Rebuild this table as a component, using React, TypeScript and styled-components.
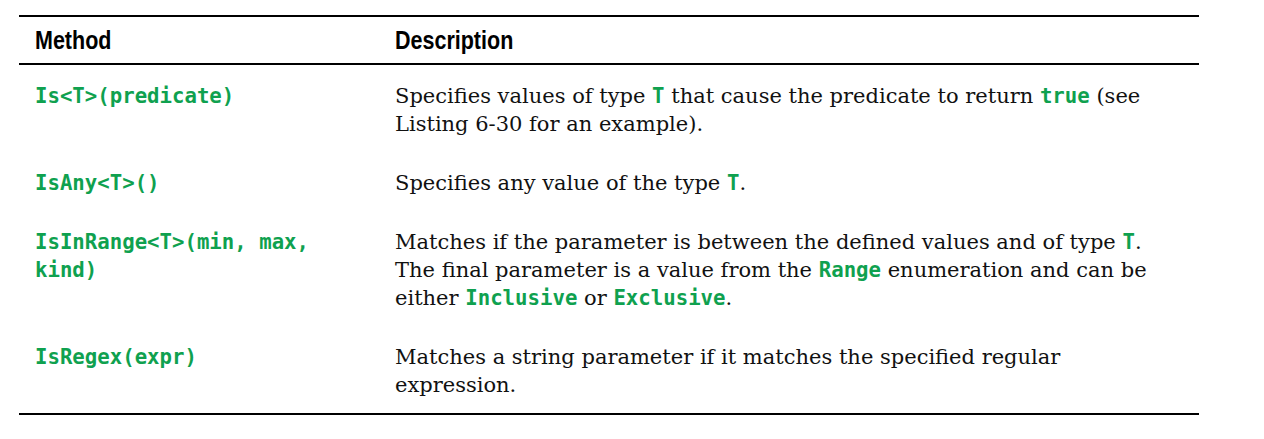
import React from 'react';
import styled, { createGlobalStyle } from 'styled-components';

const GlobalStyle = createGlobalStyle`
    html, body {
        margin: 0;
        padding: 0;
        background: #ffffff;
    }
`;

const Page = styled.div`
    padding: 15px 0 0 19px;
    width: 1180px;
`;

const Table = styled.table`
    width: 1180px;
    border-collapse: collapse;
    table-layout: fixed;
    border-top: 2px solid #000;
    border-bottom: 2px solid #000;
`;

const HeadCell = styled.th<{ $width?: string }>`
    width: ${props => props.$width || 'auto'};
    text-align: left;
    vertical-align: middle;
    height: 46px;
    padding: 0 0 0 16px;
    border-bottom: 2px solid #000;
`;

// no narrow sans installed, so squeeze the bold sans a little
const HeadLabel = styled.span`
    display: inline-block;
    transform: scaleX(0.86);
    transform-origin: left center;
    font-family: 'Liberation Sans Narrow', 'Liberation Sans', Arial, sans-serif;
    font-weight: bold;
    font-size: 25px;
    line-height: 28px;
    color: #000;
    white-space: nowrap;
`;

const Cell = styled.td<{ $last?: boolean }>`
    vertical-align: top;
    padding: 17px 16px 14px 16px;
    font-family: 'DejaVu Serif', 'Liberation Serif', serif;
    font-size: 21px;
    line-height: 28px;
    color: #111;
    white-space: nowrap;
`;

const Code = styled.code`
    font-family: 'DejaVu Sans Mono', 'Liberation Mono', monospace;
    font-weight: bold;
    font-size: 20.7px;
    line-height: 1;
    color: #0fa14f;
`;

interface MethodRow {
    method: React.ReactNode;
    description: React.ReactNode;
}

const rows: MethodRow[] = [
    {
        method: 'Is<T>(predicate)',
        description: (
            <>
                Specifies values of type <Code>T</Code> that cause the predicate to return <Code>true</Code> (see
                <br />
                Listing 6-30 for an example).
            </>
        ),
    },
    {
        method: 'IsAny<T>()',
        description: (
            <>
                Specifies any value of the type <Code>T</Code>.
            </>
        ),
    },
    {
        method: (
            <>
                IsInRange&lt;T&gt;(min, max,
                <br />
                kind)
            </>
        ),
        description: (
            <>
                Matches if the parameter is between the defined values and of type <Code>T</Code>.
                <br />
                The final parameter is a value from the <Code>Range</Code> enumeration and can be
                <br />
                either <Code>Inclusive</Code> or <Code>Exclusive</Code>.
            </>
        ),
    },
    {
        method: 'IsRegex(expr)',
        description: (
            <>
                Matches a string parameter if it matches the specified regular
                <br />
                expression.
            </>
        ),
    },
];

const App = () => {
    return (
        <Page>
            <GlobalStyle />
            <Table>
                <thead>
                    <tr>
                        <HeadCell $width="344px">
                            <HeadLabel>Method</HeadLabel>
                        </HeadCell>
                        <HeadCell>
                            <HeadLabel>Description</HeadLabel>
                        </HeadCell>
                    </tr>
                </thead>
                <tbody>
                    {rows.map((row, idx) => (
                        <tr key={idx}>
                            <Cell>
                                <Code>{row.method}</Code>
                            </Cell>
                            <Cell>{row.description}</Cell>
                        </tr>
                    ))}
                </tbody>
            </Table>
        </Page>
    );
};

export default App;
